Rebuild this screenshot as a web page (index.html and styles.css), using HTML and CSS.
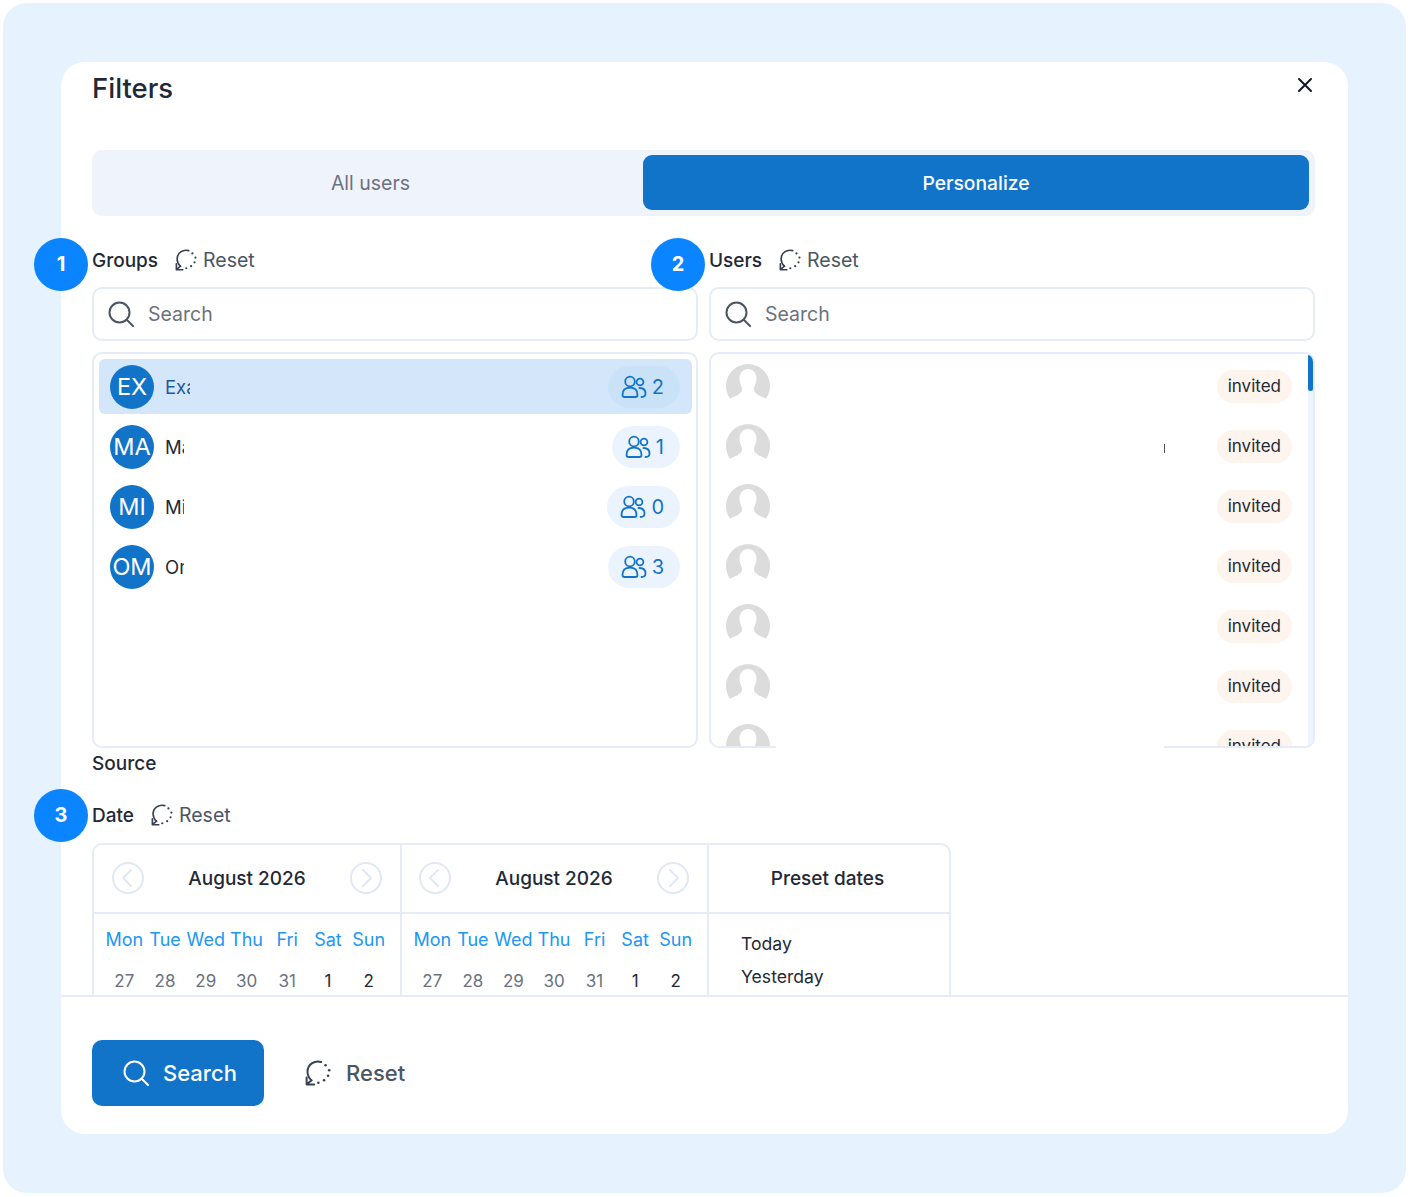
FILE: index.html
```html
<!DOCTYPE html>
<html lang="en">
<head>
    <meta charset="UTF-8">
    <meta name="viewport" content="width=device-width, initial-scale=1.0">
    <title>Filters</title>
    <link rel="stylesheet" href="styles.css">
</head>
<body>
    <svg class="sprites" width="0" height="0" aria-hidden="true">
        <symbol id="i-search" viewBox="0 0 26 26">
            <circle cx="11.5" cy="11.5" r="10" fill="none" stroke="currentColor" stroke-width="2"/>
            <path d="M19 19l6 6" fill="none" stroke="currentColor" stroke-width="2" stroke-linecap="round"/>
        </symbol>
        <symbol id="i-reset" viewBox="0 0 24 24">
            <path d="M15 1.800C8.600 0 2.300 4.200 2.300 10.800c0 3 1.300 5.800 3.700 8" fill="none" stroke="currentColor" stroke-width="1.800" stroke-linecap="round"/>
            <path d="M1.500 22.600h7M1.500 22.600v-6.500M1.500 22.600l4.500-3.800" fill="none" stroke="currentColor" stroke-width="1.800" stroke-linecap="round" stroke-linejoin="round"/>
            <g fill="currentColor">
                <circle cx="19" cy="4.800" r="1.200"/>
                <circle cx="22.300" cy="9.400" r="1.200"/>
                <circle cx="21.300" cy="14.500" r="1.200"/>
                <circle cx="17.600" cy="18.700" r="1.200"/>
                <circle cx="12.300" cy="21" r="1.200"/>
            </g>
        </symbol>
        <symbol id="i-users" viewBox="0 0 26 24">
            <g fill="none" stroke="currentColor" stroke-width="1.800" stroke-linecap="round" stroke-linejoin="round">
                <circle cx="9" cy="6.500" r="4.800"/>
                <path d="M1.500 20c0-4.800 3-7.300 7.500-7.300s7.500 2.500 7.500 7.300c0 1.300-.8 2-2 2H3.500c-1.200 0-2-.7-2-2z"/>
                <circle cx="19" cy="7" r="3.400"/>
                <path d="M18.500 13c3.800 0 6 2.200 6 5.500 0 2.300-1.700 3.500-4 3.500"/>
            </g>
        </symbol>
        <symbol id="i-person" viewBox="0 0 44 44">
            <circle cx="22" cy="22" r="22" fill="#dcdcdc"/>
            <path d="M22 5c5 0 8.500 4 8.500 9 0 5-1.500 7-2.500 10-.5 3 1 5 4 7l10 4.500V44H2v-8.500L12 31c3-2 4.500-4 4-7-1-3-2.500-5-2.500-10 0-5 3.500-9 8.500-9z" fill="#fff"/>
        </symbol>
        <symbol id="i-prev" viewBox="0 0 32 32">
            <circle cx="16" cy="16" r="15" fill="none" stroke="currentColor" stroke-width="2"/>
            <path d="M19 8l-8 8 8 8" fill="none" stroke="currentColor" stroke-width="2" stroke-linecap="round" stroke-linejoin="round"/>
        </symbol>
        <symbol id="i-next" viewBox="0 0 32 32">
            <circle cx="16" cy="16" r="15" fill="none" stroke="currentColor" stroke-width="2"/>
            <path d="M13 8l8 8-8 8" fill="none" stroke="currentColor" stroke-width="2" stroke-linecap="round" stroke-linejoin="round"/>
        </symbol>
    </svg>

    <div class="panel">
        <div class="modal">
            <div class="modal-body">
                <div class="modal-head">
                    <h1 class="title">Filters</h1>
                    <svg class="close" viewBox="0 0 16 16"><path d="M2 2l12 12M14 2L2 14" fill="none" stroke="#111827" stroke-width="2" stroke-linecap="round"/></svg>
                </div>

                <div class="tabs">
                    <div class="tab">All users</div>
                    <div class="tab active">Personalize</div>
                </div>

                <div class="columns">
                    <div class="col">
                        <span class="step step-col">1</span>
                        <div class="label-row">
                            <span class="label">Groups</span>
                            <span class="reset"><svg class="reset-icon"><use href="#i-reset"/></svg>Reset</span>
                        </div>
                        <div class="search-box">
                            <svg class="search-icon"><use href="#i-search"/></svg>
                            <span>Search</span>
                        </div>
                        <div class="list group-list">
                            <div class="group selected">
                                <span class="avatar">EX</span>
                                <span class="group-name clip-wide">Example</span>
                                <span class="count"><svg class="users-icon"><use href="#i-users"/></svg>2</span>
                            </div>
                            <div class="group">
                                <span class="avatar">MA</span>
                                <span class="group-name">Marketing</span>
                                <span class="count"><svg class="users-icon"><use href="#i-users"/></svg>1</span>
                            </div>
                            <div class="group">
                                <span class="avatar">MI</span>
                                <span class="group-name">Mining</span>
                                <span class="count"><svg class="users-icon"><use href="#i-users"/></svg>0</span>
                            </div>
                            <div class="group">
                                <span class="avatar">OM</span>
                                <span class="group-name">Omega</span>
                                <span class="count"><svg class="users-icon"><use href="#i-users"/></svg>3</span>
                            </div>
                        </div>
                    </div>

                    <div class="col">
                        <span class="step step-col">2</span>
                        <div class="label-row">
                            <span class="label">Users</span>
                            <span class="reset"><svg class="reset-icon"><use href="#i-reset"/></svg>Reset</span>
                        </div>
                        <div class="search-box">
                            <svg class="search-icon"><use href="#i-search"/></svg>
                            <span>Search</span>
                        </div>
                        <div class="list user-list">
                            <div class="user"><svg class="person"><use href="#i-person"/></svg><span class="status">invited</span></div>
                            <div class="user"><svg class="person"><use href="#i-person"/></svg><span class="status">invited</span></div>
                            <div class="user"><svg class="person"><use href="#i-person"/></svg><span class="status">invited</span></div>
                            <div class="user"><svg class="person"><use href="#i-person"/></svg><span class="status">invited</span></div>
                            <div class="user"><svg class="person"><use href="#i-person"/></svg><span class="status">invited</span></div>
                            <div class="user"><svg class="person"><use href="#i-person"/></svg><span class="status">invited</span></div>
                            <div class="user"><svg class="person"><use href="#i-person"/></svg><span class="status">invited</span></div>
                            <div class="scroll-track"><div class="scroll-thumb"></div></div>
                        </div>
                        <div class="tick"></div>
                        <div class="border-gap"></div>
                    </div>
                </div>

                <div class="label source">Source</div>

                <div class="date-section">
                    <span class="step step-date">3</span>
                    <div class="label-row date-row">
                        <span class="label">Date</span>
                        <span class="reset"><svg class="reset-icon"><use href="#i-reset"/></svg>Reset</span>
                    </div>
                    <div class="calendar">
                        <div class="month">
                            <div class="cal-head">
                                <svg class="nav"><use href="#i-prev"/></svg>
                                <span>August 2026</span>
                                <svg class="nav"><use href="#i-next"/></svg>
                            </div>
                            <div class="cal-grid">
                                <span class="wd">Mon</span><span class="wd">Tue</span><span class="wd">Wed</span><span class="wd">Thu</span><span class="wd">Fri</span><span class="wd">Sat</span><span class="wd">Sun</span>
                                <span class="day">27</span><span class="day">28</span><span class="day">29</span><span class="day">30</span><span class="day">31</span><span class="day now">1</span><span class="day now">2</span>
                            </div>
                        </div>
                        <div class="month">
                            <div class="cal-head">
                                <svg class="nav"><use href="#i-prev"/></svg>
                                <span>August 2026</span>
                                <svg class="nav"><use href="#i-next"/></svg>
                            </div>
                            <div class="cal-grid">
                                <span class="wd">Mon</span><span class="wd">Tue</span><span class="wd">Wed</span><span class="wd">Thu</span><span class="wd">Fri</span><span class="wd">Sat</span><span class="wd">Sun</span>
                                <span class="day">27</span><span class="day">28</span><span class="day">29</span><span class="day">30</span><span class="day">31</span><span class="day now">1</span><span class="day now">2</span>
                            </div>
                        </div>
                        <div class="presets">
                            <div class="cal-head preset-head">Preset dates</div>
                            <div class="preset-list">
                                <div class="preset">Today</div>
                                <div class="preset">Yesterday</div>
                            </div>
                        </div>
                    </div>
                </div>
            </div>

            <div class="modal-foot">
                <div class="search-btn"><svg class="btn-icon"><use href="#i-search"/></svg>Search</div>
                <div class="foot-reset"><svg class="foot-reset-icon"><use href="#i-reset"/></svg>Reset</div>
            </div>
        </div>
    </div>
</body>
</html>
```

FILE: styles.css
```css
* {
    box-sizing: border-box;
}
body {
    margin: 0;
    padding: 3px 4px 4px 3px;
    background-color: #fff;
    font-family: "Inter", "Liberation Sans", sans-serif;
    color: #1f2937;
}
.sprites {
    position: absolute;
}
.panel {
    height: 1190px;
    padding: 59px 58px;
    background-color: #e6f3ff;
    border-radius: 24px;
}
.modal {
    width: 1287px;
    height: 1072px;
    display: flex;
    flex-direction: column;
    background-color: #fff;
    border-radius: 24px;
}
.modal-body {
    flex: 1;
    min-height: 0;
    overflow: hidden;
    margin-left: -31px; /* step circles hang over the modal edge */
    padding: 0 33px 0 62px;
}

/* title and tabs */
.modal-head {
    height: 88px;
    display: flex;
    justify-content: space-between;
    align-items: flex-start;
}
.title {
    margin: 0;
    font-size: 27.5px;
    font-weight: 500;
    line-height: 52px;
}
.close {
    width: 16px;
    height: 16px;
    margin: 15px 2px 0 0;
}
.tabs {
    height: 66px;
    display: grid;
    grid-template-columns: 545px 666px;
    padding: 5px 6px 6px;
    background-color: #eff3fb;
    border-radius: 10px;
}
.tab {
    display: flex;
    justify-content: center;
    align-items: center;
    font-size: 19.5px;
    color: #6b7280;
    border-radius: 9px;
}
.tab.active {
    background-color: #1174c9;
    color: #fff;
    font-size: 19.3px;
    font-weight: 500;
}

/* groups + users */
.columns {
    display: grid;
    grid-template-columns: 606px 606px;
    gap: 11px;
    margin-top: 28px;
}
.col {
    position: relative;
}
.step {
    position: absolute;
    width: 54px;
    height: 53px;
    padding-bottom: 2px;
    display: flex;
    justify-content: center;
    align-items: center;
    background-color: #0a84ff;
    border-radius: 50%;
    color: #fff;
    font-size: 20px;
    font-weight: 700;
}
.step-col {
    left: -58px;
    top: -6px;
}
.step-date {
    left: -58px;
    top: -10px;
}
.label-row {
    height: 32px;
    display: flex;
    align-items: center;
    gap: 17px;
}
.label {
    font-size: 19px;
    font-weight: 500;
    line-height: 24px;
}
.label-row .label {
    margin-top: 2px;
}
.reset {
    display: flex;
    align-items: center;
    gap: 6px;
    font-size: 19.5px;
    color: #4b5563;
}
.reset-icon {
    width: 22px;
    height: 22px;
    color: #374151;
}
.search-box {
    height: 54px;
    margin-top: 11px;
    padding-left: 14px;
    display: flex;
    align-items: center;
    gap: 14px;
    border: 2px solid #e6ebf8;
    border-radius: 10px;
    font-size: 19.5px;
    color: #6b7280;
}
.search-icon {
    width: 26px;
    height: 26px;
    color: #4b5563;
}
.list {
    position: relative;
    height: 396px;
    margin-top: 11px;
    overflow: hidden;
    border: 2px solid #e6ebf8;
    border-radius: 10px;
}
.group-list {
    padding: 5px 4px 0 5px;
    display: flex;
    flex-direction: column;
    gap: 5px;
}
.group {
    height: 55px;
    flex-shrink: 0;
    padding: 0 12px 0 11px;
    display: flex;
    align-items: center;
    border-radius: 6px;
}
.group.selected {
    background-color: #d4e7fa;
    color: #1f5a96;
}
.avatar {
    width: 44px;
    height: 44px;
    display: flex;
    justify-content: center;
    align-items: center;
    background-color: #1174c9;
    border-radius: 50%;
    color: #fff;
    font-size: 23.5px;
}
.group-name {
    width: 19px;
    margin-left: 11px;
    overflow: hidden;
    white-space: nowrap;
    font-size: 18.5px;
}
.group-name.clip-wide {
    width: 25px;
}
.count {
    margin-left: auto;
    height: 42px;
    padding: 0 16px 0 13px;
    display: flex;
    align-items: center;
    gap: 5px;
    background-color: #ebf4fe;
    border-radius: 21px;
    color: #1174c9;
    font-size: 20px;
}
.selected .count {
    background-color: #c9e2f8;
}
.users-icon {
    width: 26px;
    height: 24px;
}
.user-list {
    padding-top: 2px;
}
.user {
    height: 60px;
    padding: 8px 21px 0 15px;
    display: flex;
    justify-content: space-between;
    align-items: flex-start;
}
.person {
    width: 44px;
    height: 44px;
}
.status {
    height: 33px;
    margin-top: 6px;
    padding: 0 11px 1px;
    display: flex;
    align-items: center;
    background-color: #fdf4ed;
    border-radius: 16px;
    font-size: 17px;
}
.scroll-track {
    position: absolute;
    top: 0;
    right: 0;
    width: 5px;
    height: 100%;
    background-color: #eef4fd;
}
.scroll-thumb {
    width: 5px;
    height: 37px;
    background-color: #1174c9;
    border-radius: 3px;
}
/* small remnant and break in the list border */
.tick {
    position: absolute;
    left: 455px;
    top: 200px;
    width: 1px;
    height: 9px;
    background-color: #555;
}
.border-gap {
    position: absolute;
    left: 67px;
    bottom: 0;
    width: 388px;
    height: 3px;
    background-color: #fff;
}

/* date section */
.source {
    margin-top: 4px;
}
.date-section {
    position: relative;
    margin-top: 23px;
}
.calendar {
    width: 859px;
    height: 200px;
    margin-top: 12px;
    display: grid;
    grid-template-columns: 308px 307px 1fr;
    border: 2px solid #e6ebf8;
    border-bottom: 0;
    border-radius: 10px 10px 0 0;
}
.month {
    border-right: 2px solid #e6ebf8;
}
.cal-head {
    height: 69px;
    padding: 0 18px 1px;
    display: flex;
    justify-content: space-between;
    align-items: center;
    border-bottom: 2px solid #e6ebf8;
    font-size: 19px;
    font-weight: 500;
}
.month + .month .cal-head {
    padding-left: 17px;
}
.preset-head {
    justify-content: center;
    padding: 0 3px 1px 0;
}
.nav {
    width: 32px;
    height: 32px;
    color: #e0e7f5;
}
.cal-grid {
    padding: 4px 11px 0 10px;
    display: grid;
    grid-template-columns: repeat(7, 1fr);
    grid-auto-rows: 42px;
    align-items: center;
    text-align: center;
}
.wd {
    font-size: 18px;
    color: #2196f3;
}
.day {
    font-size: 17px;
    color: #6b7280;
}
.day.now {
    color: #1f2937;
}
.preset-list {
    padding: 13px 0 0 32px;
}
.preset {
    height: 33px;
    display: flex;
    align-items: center;
    font-size: 17.6px;
}

/* footer */
.modal-foot {
    height: 139px;
    flex-shrink: 0;
    padding: 43px 31px 0;
    display: flex;
    align-items: flex-start;
    gap: 41px;
    border-top: 2px solid #e6ebf8;
}
.search-btn {
    width: 172px;
    height: 66px;
    padding-left: 31px;
    display: flex;
    align-items: center;
    gap: 14px;
    background-color: #1174c9;
    border-radius: 10px;
    color: #fff;
    font-size: 22px;
    font-weight: 500;
}
.btn-icon {
    width: 26px;
    height: 26px;
}
.foot-reset {
    height: 66px;
    display: flex;
    align-items: center;
    gap: 15px;
    font-size: 22px;
    font-weight: 500;
    color: #4b5563;
}
.foot-reset-icon {
    width: 26px;
    height: 26px;
    color: #374151;
}
```
